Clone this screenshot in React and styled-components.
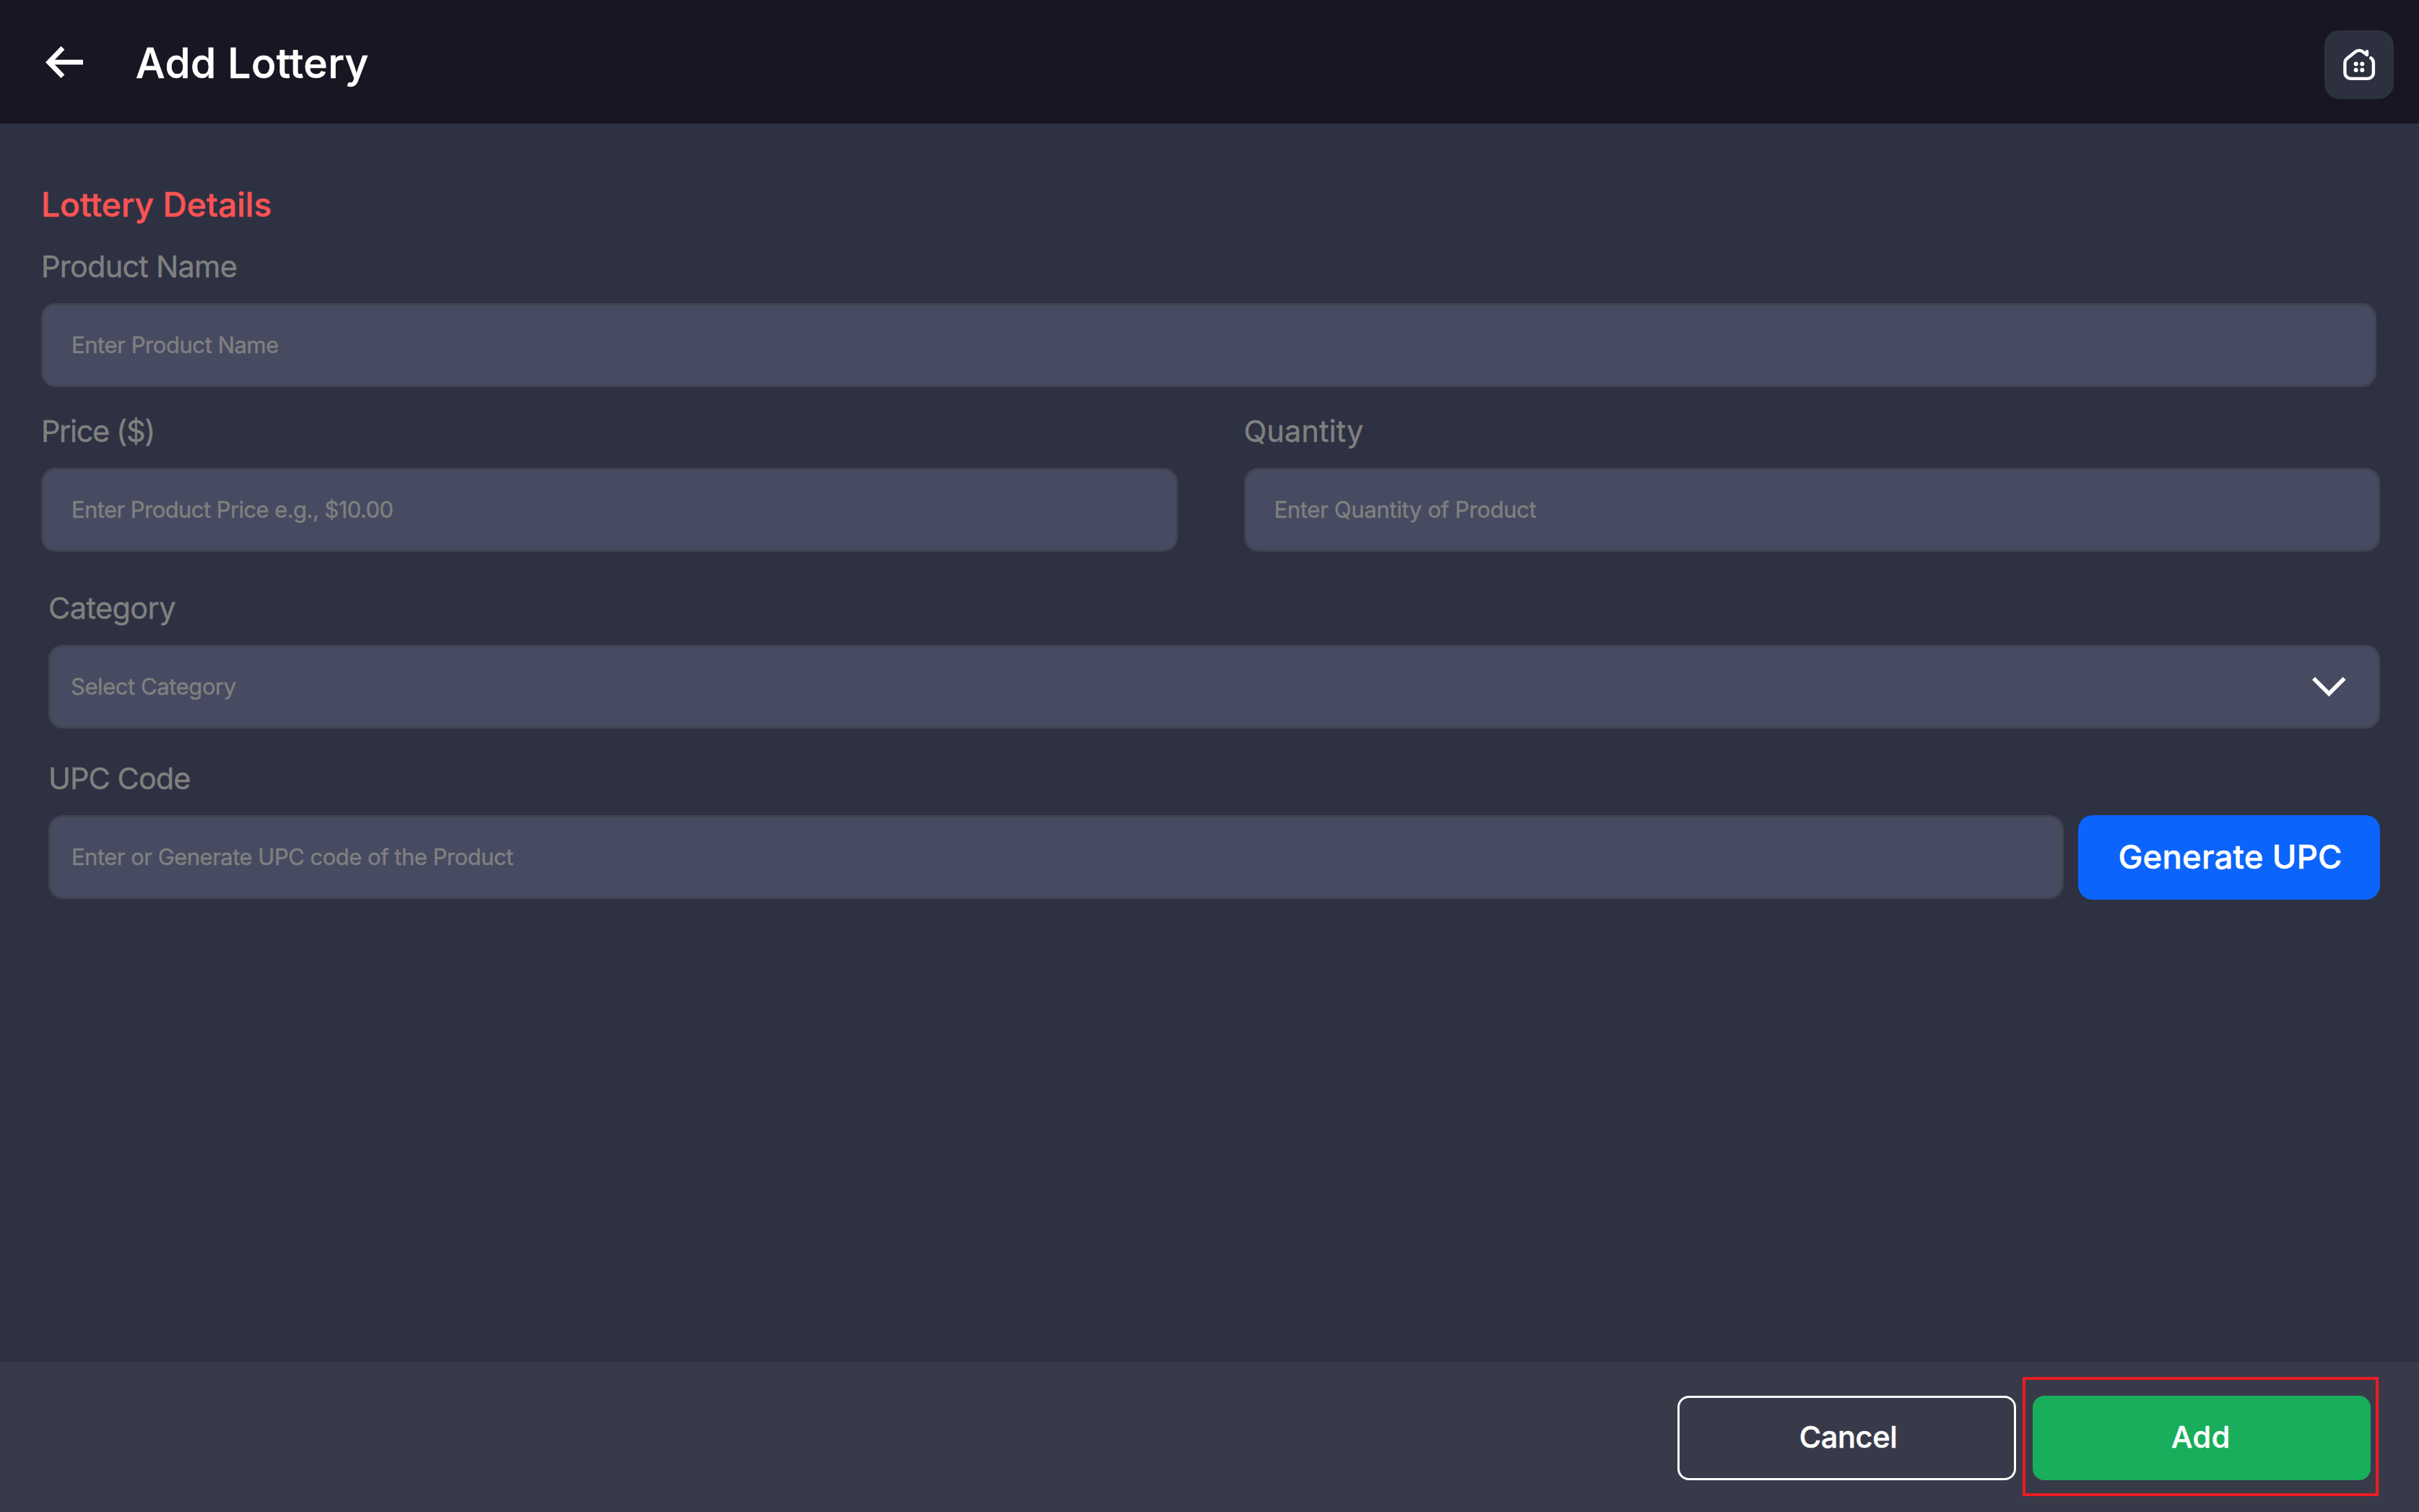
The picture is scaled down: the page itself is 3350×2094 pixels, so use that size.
import React from "react";
import styled, { createGlobalStyle } from "styled-components";

const GlobalStyle = createGlobalStyle`
  *, *::before, *::after { box-sizing: border-box; }
  body { margin: 0; background: #2e3142; }
  button, input { font-family: inherit; }
`;

const Page = styled.div`
  display: flex;
  flex-direction: column;
  width: 100%;
  height: 2094px;
  background: #2e3142;
  color: #fff;
  font-family: Inter, "Liberation Sans", sans-serif;
`;

const Header = styled.header`
  display: flex;
  align-items: center;
  height: 171px;
  padding: 0 35px 0 63px;
  background: #181622;
`;

const IconButton = styled.button`
  display: flex;
  padding: 0;
  border: 0;
  background: none;
  color: inherit;
`;

const Title = styled.h1`
  flex: 1;
  margin: 0 0 0 73px;
  padding-top: 4px;
  font-size: 57px;
  font-weight: 500;
  line-height: 70px;
  letter-spacing: 0.42px;
  -webkit-text-stroke: 0.6px currentColor;
`;

const HomeButton = styled(IconButton)`
  width: 96px;
  height: 95px;
  margin-top: 8px;
  border-radius: 21px;
  background: #2d313f;
`;

const Main = styled.main`
  flex: 1;
  display: flex;
  flex-direction: column;
  padding: 84px 54px 0 57px;
`;

const SectionTitle = styled.h2`
  margin: 0;
  color: #fa5354;
  font-size: 46px;
  font-weight: 500;
  line-height: 56px;
  letter-spacing: 0.11px;
  -webkit-text-stroke: 0.5px currentColor;
`;

const FieldRow = styled.div`
  display: flex;
  align-items: flex-end;
  gap: ${(p) => p.$gap || 0}px;
  margin-top: ${(p) => p.$top}px;
  padding-left: ${(p) => p.$indent || 0}px;
  padding-right: ${(p) => p.$inset || 0}px;
`;

const Field = styled.label`
  flex: 1;
  min-width: 0;
  display: flex;
  flex-direction: column;
  gap: 26px;
`;

const FieldLabel = styled.span`
  color: #808080;
  font-size: 41.5px;
  line-height: 50px;
  letter-spacing: ${(p) => p.$tracking}px;
  white-space: nowrap;
  -webkit-text-stroke: 0.4px currentColor;
`;

const Control = styled.span`
  display: flex;
  align-items: center;
  height: 116px;
  padding: 0 44px 0 ${(p) => p.$pad}px;
  border: 3px solid #42444f;
  border-radius: 20px;
  background: #474b61;
`;

const Input = styled.input`
  flex: 1;
  min-width: 0;
  height: 60px;
  padding: 0 0 2px;
  border: 0;
  outline: 0;
  background: transparent;
  color: #fff;
  font-size: 31px;
  letter-spacing: ${(p) => p.$tracking}px;

  &::placeholder {
    color: #808080;
    opacity: 1;
    -webkit-text-stroke: 0.4px #808080;
  }
`;

const Button = styled.button`
  display: flex;
  align-items: center;
  justify-content: center;
  flex: none;
  border: 0;
  color: #fff;
  font-weight: 500;
  white-space: nowrap;
  -webkit-text-stroke: 0.5px currentColor;
`;

const GenerateButton = styled(Button)`
  width: 418px;
  height: 117px;
  margin-bottom: -1px;
  padding: 0 0 2px 3px;
  border-radius: 20px;
  background: #0b64fb;
  font-size: 45.5px;
  letter-spacing: 0.16px;
`;

const Footer = styled.footer`
  display: flex;
  justify-content: flex-end;
  align-items: flex-start;
  gap: 9px;
  height: 208px;
  padding: 21px 56px 0 0;
  background: #393a49;
`;

const CancelButton = styled(Button)`
  width: 469px;
  height: 117px;
  margin-top: 26px;
  padding: 0 0 3px 4px;
  border: 3px solid #fff;
  border-radius: 16px;
  background: transparent;
  font-size: 41.5px;
  letter-spacing: -0.36px;
`;

const Highlight = styled.div`
  width: 493px;
  height: 165px;
  padding: 22px 0 0 10px;
  border: 4px solid #ed1c24;
`;

const AddButton = styled(Button)`
  width: 468px;
  height: 117px;
  padding: 0 2px 3px 0;
  border-radius: 16px;
  background: #18ae5c;
  font-size: 41.5px;
  letter-spacing: 0.6px;
`;

const BackIcon = () => (
  <svg width="52" height="44" viewBox="0 0 52 44" fill="none" stroke="currentColor" strokeWidth="6.8">
    <path d="M24 2.4 4.8 22.2 24 41.8M6 22.2H52" />
  </svg>
);

const HomeIcon = () => (
  <svg width="96" height="95" viewBox="0 0 96 95" fill="none" stroke="currentColor" strokeWidth="4.4" strokeLinecap="round" strokeLinejoin="round">
    <path d="M64.2 38.2C66.6 39.8 67.9 42.2 67.9 45V58.5C67.9 63.3 64.3 66.9 59.5 66.9H36.8C32 66.9 28.4 63.3 28.4 58.5V45.4C28.4 42.8 29.6 40.4 31.6 38.8L42.6 30C45.6 27.5 50 27.3 53.1 29.6L59 34V29.2" />
    <g fill="currentColor" stroke="none">
      <circle cx="43.7" cy="46.4" r="3" />
      <circle cx="52.3" cy="46.4" r="3" />
      <circle cx="43.7" cy="55" r="3" />
      <circle cx="52.3" cy="55" r="3" />
    </g>
  </svg>
);

const ChevronIcon = () => (
  <svg width="47" height="28" viewBox="0 0 47 28" fill="none" stroke="currentColor" strokeWidth="5.6">
    <path d="M2 2.4 23.3 23.8 44.6 2.4" />
  </svg>
);

function TextField({ label, labelTracking, placeholder, tracking, pad = 39, children }) {
  return (
    <Field>
      <FieldLabel $tracking={labelTracking}>{label}</FieldLabel>
      <Control $pad={pad}>
        <Input placeholder={placeholder} $tracking={tracking} />
        {children}
      </Control>
    </Field>
  );
}

export default function App() {
  return (
    <Page>
      <GlobalStyle />
      <Header>
        <IconButton aria-label="Back"><BackIcon /></IconButton>
        <Title>Add Lottery</Title>
        <HomeButton aria-label="Home"><HomeIcon /></HomeButton>
      </Header>
      <Main>
        <SectionTitle>Lottery Details</SectionTitle>
        <FieldRow $top={33} $inset={5}>
          <TextField label="Product Name" labelTracking={-0.77} placeholder="Enter Product Name" tracking={-0.43} />
        </FieldRow>
        <FieldRow $top={36} $gap={92}>
          <TextField label="Price ($)" labelTracking={-1.38} placeholder="Enter Product Price e.g., $10.00" tracking={-0.57} />
          <TextField label="Quantity" labelTracking={0.05} placeholder="Enter Quantity of Product" tracking={-0.32} />
        </FieldRow>
        <FieldRow $top={53} $indent={10}>
          <TextField label="Category" labelTracking={-0.62} placeholder="Select Category" tracking={-0.43} pad={28}>
            <ChevronIcon />
          </TextField>
        </FieldRow>
        <FieldRow $top={44} $indent={10} $gap={20}>
          <TextField label="UPC Code" labelTracking={-0.95} placeholder="Enter or Generate UPC code of the Product" tracking={-0.51} pad={29} />
          <GenerateButton>Generate UPC</GenerateButton>
        </FieldRow>
      </Main>
      <Footer>
        <CancelButton>Cancel</CancelButton>
        <Highlight>
          <AddButton>Add</AddButton>
        </Highlight>
      </Footer>
    </Page>
  );
}
